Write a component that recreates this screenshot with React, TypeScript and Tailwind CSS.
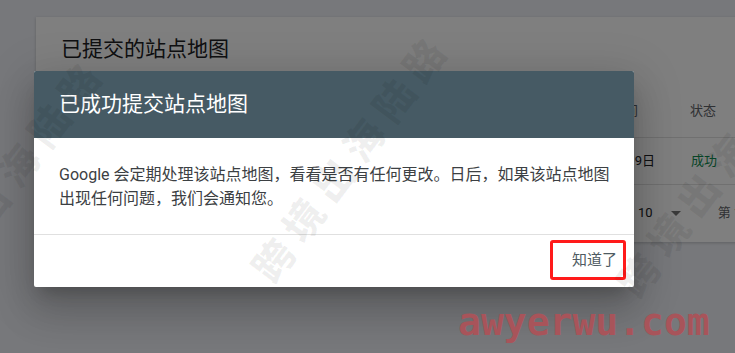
import React from "react";

const FONT = "font-['Roboto','Noto_Sans_CJK_SC',sans-serif]";

function Watermark({ className }: { className: string }) {
  return (
    <div
      className={`pointer-events-none absolute origin-left -rotate-[53deg] whitespace-nowrap font-['Noto_Sans_CJK_SC',sans-serif] text-[40px] font-black leading-[40px] tracking-[10px] text-black/[0.06] ${className}`}
    >
      跨境出海陆路
    </div>
  );
}

export default function App() {
  return (
    <div className={`relative h-[353px] w-[735px] overflow-hidden bg-[#eef0f6] ${FONT}`}>
      {/* underlying page */}
      <div className="pl-[36px] pt-[17px]">
        <div className="flex h-[225px] w-[860px] flex-col bg-white shadow-[0_1px_3px_rgba(0,0,0,0.2)]">
          <div className="h-[67px] pl-[25px] pt-[18px] text-[21px] leading-[28px] text-[#202124]">
            已提交的站点地图
          </div>
          <div className="flex h-[54px] items-center whitespace-nowrap border-b border-[#e0e0e0] text-[13px] text-[#5f6368]">
            <div className="w-[602px] shrink-0 text-right">上次读取时间</div>
            <div className="shrink-0 pl-[52px]">状态</div>
          </div>
          <div className="flex h-[47px] items-center whitespace-nowrap border-b border-[#e0e0e0] text-[13px]">
            <div className="w-[619px] shrink-0 text-right text-[#202124]">2021年3月9日</div>
            <div className="shrink-0 pl-[36px] text-[#0f8a4f]">成功</div>
          </div>
          <div className="flex h-[56px] items-center whitespace-nowrap text-[13px] text-[#5f6368]">
            <div className="w-[566px] shrink-0 text-right">每页行数：</div>
            <div className="shrink-0 pl-[36px] text-[#202124]">10</div>
            <div className="ml-[18px] h-0 w-0 shrink-0 border-x-[5px] border-t-[5px] border-x-transparent border-t-[#757575]"></div>
            <div className="shrink-0 pl-[37px]">第 1-1 行，共 1 行</div>
          </div>
        </div>
      </div>

      {/* scrim */}
      <div className="absolute inset-0 bg-black/50"></div>

      {/* dialog */}
      <div className="absolute left-[34px] top-[71px] w-[600px] overflow-hidden rounded-[2px] bg-white shadow-[0_11px_15px_-7px_rgba(0,0,0,0.2),0_24px_38px_3px_rgba(0,0,0,0.14),0_9px_46px_8px_rgba(0,0,0,0.12)]">
        <div className="flex h-[67px] items-center bg-[#465a64] pl-[25px] text-[21px] text-white">
          已成功提交站点地图
        </div>
        <div className="h-[96px] pl-[25px] pr-[20px] pt-[25px] text-[16px] leading-[24px] text-[#3c4043]">
          Google 会定期处理该站点地图，看看是否有任何更改。日后，如果该站点地图出现任何问题，我们会通知您。
        </div>
        <div className="flex h-[53px] justify-end border-t border-[#e0e0e0] pr-[8px] pt-[5px]">
          <button className="flex h-[40px] w-[76px] items-center justify-end rounded-[3px] border-[3px] border-[#ff1a1a] pr-[6px] text-[15px] text-[#4f5b62]">
            知道了
          </button>
        </div>
      </div>

      {/* watermarks */}
      <Watermark className="left-[-85px] top-[280px]" />
      <Watermark className="left-[260px] top-[255px]" />
      <Watermark className="left-[625px] top-[270px]" />
      <div className="pointer-events-none absolute left-[458px] top-[300px] font-['DejaVu_Sans_Mono',monospace] text-[38px] font-bold leading-[44px] text-[#a8545a]">
        awyerwu.com
      </div>
    </div>
  );
}
